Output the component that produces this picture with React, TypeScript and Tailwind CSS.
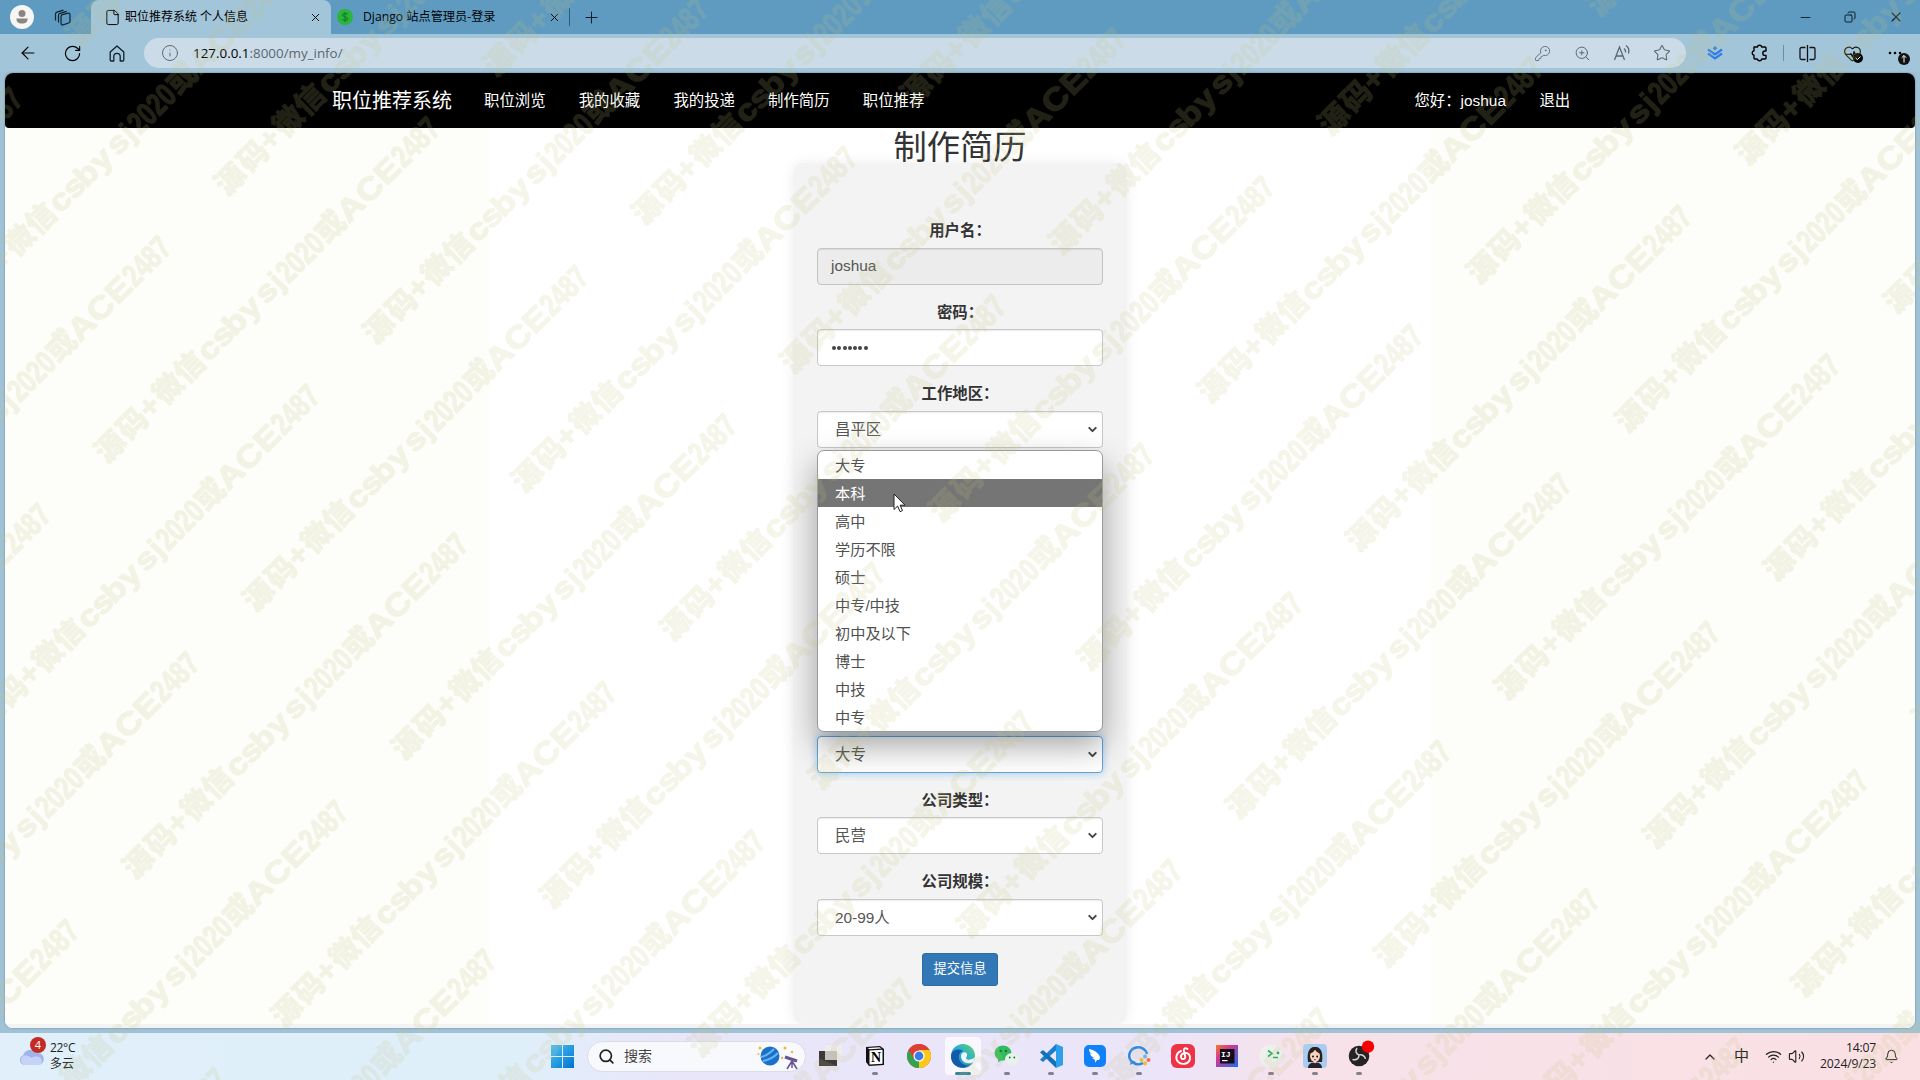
import React from "react";
import {
  ArrowLeft, RotateCw, Info, KeyRound, ZoomIn, Star, X, Plus, Minus, File, Search,
  Wifi, Volume2, Bell, ChevronUp, ChevronDown, HeartPulse, Copy,
} from "lucide-react";

const ui = "font-['Open_Sans','Noto_Sans_CJK_SC',sans-serif]";
const page = "font-['Liberation_Sans','Noto_Sans_CJK_SC',sans-serif]";

/* ---------- Browser chrome ---------- */

function TabBar() {
  return (
    <div className="flex h-[34px] items-stretch bg-[#5f9bc0] text-[#10202c]">
      <div className="flex w-[43px] items-center justify-center">
        <svg width="24" height="28" viewBox="0 0 24 28">
          <ellipse cx="12" cy="14" rx="12" ry="12" fill="#f6f6f4" />
          <circle cx="12" cy="10.5" r="3.5" fill="#8b8580" />
          <path d="M6.4 15.500h11.2c0 4-2.3 5-5.6 5s-5.6-1-5.6-5z" fill="#8b8580" />
        </svg>
      </div>
      <div className="flex w-[48px] items-center pl-[11px]">
        <svg width="17" height="17" viewBox="0 0 17 17" fill="none" stroke="#10202c" strokeWidth="1.2">
          <path d="M7.500 5.800l6.500-1.600a1.600 1.600 0 0 1 2 1.600v6.500a1.800 1.800 0 0 1-1.300 1.700L9.300 15.800A1.600 1.600 0 0 1 7 14.300V7.500z" />
          <path d="M4.500 13.500V6.200a2 2 0 0 1 1.400-1.900L12.600 2.400" />
          <path d="M1.500 11.500V5a2 2 0 0 1 1.400-1.900L9.500 1.200" />
        </svg>
      </div>
      <div className="flex w-[240px] items-center rounded-t-lg bg-[#a3c5da] pl-[13px] text-[12px] text-black">
        <File size={17} strokeWidth={1.4} />
        <span className="ml-1 flex-1 whitespace-nowrap">职位推荐系统 个人信息</span>
        <X size={13} strokeWidth={1.7} className="mr-[9px]" />
      </div>
      <div className="flex w-[238px] items-center pl-[6px] text-[12.2px] text-black">
        <div className="flex size-4 items-center justify-center rounded-full bg-[#2cb53c]">
          <svg width="8" height="10" viewBox="0 0 8 10" fill="none" stroke="#158128" strokeWidth="1.2">
            <path d="M6.5 2.200C5.500 .8 1.500 1 1.500 3s5 1.500 5 3.700-4 2-5.200 .5M4 0v10" />
          </svg>
        </div>
        <span className="ml-[10px] flex-1 whitespace-nowrap">Django 站点管理员-登录</span>
        <X size={13} strokeWidth={1.7} className="mr-[8px]" />
      </div>
      <div className="my-[8px] w-px bg-[#2f5a74]" />
      <Plus size={19} strokeWidth={1.3} className="ml-3 self-center" />
      <div className="ml-auto flex w-[138px] items-center justify-around">
        <Minus size={15} strokeWidth={1.500} />
        <Copy size={12} strokeWidth={2} className="-scale-x-100" />
        <X size={16} strokeWidth={1.6} />
      </div>
    </div>
  );
}

function ToolBar() {
  return (
    <div className="flex h-[38px] items-center bg-[#a3c5da] text-[#1c2a34]">
      <div className="flex w-[144px] items-center pl-[18px] pr-[16px] text-black">
        <ArrowLeft size={20} strokeWidth={1.4} />
        <RotateCw size={19} strokeWidth={1.5} className="ml-[25px]" />
        <svg width="16" height="17" viewBox="0 0 16 17" fill="none" stroke="#10202c" strokeWidth="1.300" className="ml-[27px]">
          <path d="M1.200 7L8 1l6.800 6v8a1 1 0 0 1-1 1h-2.600v-4.500a3.200 3.200 0 0 0-6.400 0V16H2.200a1 1 0 0 1-1-1z" strokeLinejoin="round" />
        </svg>
      </div>
      <div className="flex h-[30px] w-[1542px] items-center rounded-full bg-[#cbdce8] pl-[17px] text-[#5b6770]">
        <Info size={18} strokeWidth={1.3} />
        <span className="ml-[14px] text-[13.400px]"><span className="text-black">127.0.0.1</span>:8000/my_info/</span>
        <div className="ml-auto mr-1 flex items-center">
          <div className="flex w-10 justify-center"><KeyRound size={17} strokeWidth={1.3} /></div>
          <div className="flex w-10 justify-center"><ZoomIn size={17} strokeWidth={1.4} /></div>
          <div className="flex w-10 justify-center">
            <svg width="18" height="18" viewBox="0 0 18 18" fill="none" stroke="currentColor" strokeWidth="1.3">
              <path d="M1.500 16L6.500 3l5 13M3.200 12h6.600M11 4.500q2 1.500 1.500 4M13 1.500q4 3 2.500 8" />
            </svg>
          </div>
          <div className="flex w-10 justify-center"><Star size={18} strokeWidth={1.4} /></div>
        </div>
      </div>
      <div className="flex w-[58px] justify-center">
        <svg width="16" height="14" viewBox="0 0 16 14" fill="none" stroke="#2b7de9" strokeWidth="2.200">
          <path d="M1 3.500l7 5 7-5M1 7.500l7 5 7-5" /><path d="M8 0l2.300 2.200L8 4.400 5.700 2.200z" fill="#2b7de9" stroke="none" />
        </svg>
      </div>
      <div className="flex w-[30px] justify-center">
        <svg width="17" height="18" viewBox="0 0 17 18" fill="none" stroke="#000" strokeWidth="1.400" strokeLinejoin="round">
          <path d="M3 3h3.300a2.300 2.300 0 0 1 4.500 0H14a1 1 0 0 1 1 1v3h-1a2.200 2.200 0 0 0 0 4.400h1V14a1 1 0 0 1-1 1h-3.200a2.300 2.300 0 0 1-4.500 0H4a1 1 0 0 1-1-1v-2.700a2.300 2.300 0 0 1 0-4.500z" />
        </svg>
      </div>
      <div className="ml-[9px] h-4 w-px bg-[#6f8ea2]" />
      <div className="flex w-[47px] justify-center">
        <svg width="17" height="17" viewBox="0 0 17 17" fill="none" stroke="#111" strokeWidth="1.300">
          <path d="M8.500 0v17M6.500 2.500h-4A1.500 1.500 0 0 0 1 4v9a1.500 1.500 0 0 0 1.500 1.500h4M10.500 2.500h4A1.500 1.500 0 0 1 16 4v9a1.500 1.500 0 0 1-1.500 1.500h-4" />
        </svg>
      </div>
      <div className="relative flex w-[42px] justify-center">
        <HeartPulse size={19} strokeWidth={1.500} className="text-[#111]" />
        <svg className="absolute left-[22px] top-[9px]" width="10" height="10" viewBox="0 0 10 10">
          <circle cx="5" cy="5" r="5" fill="#000" /><path d="M2.700 5l1.700 1.700 3-3.200" stroke="#fff" fill="none" />
        </svg>
      </div>
      <div className="relative flex h-5 w-[47px] items-center pl-[15px]">
        <svg width="14" height="4" viewBox="0 0 14 4"><circle cx="2" cy="2" r="1.300" /><circle cx="7" cy="2" r="1.300" /><circle cx="12" cy="2" r="1.300" /></svg>
        <svg className="absolute left-[25px] top-[10px]" width="12" height="12" viewBox="0 0 12 12">
          <circle cx="6" cy="6" r="6" fill="#111" /><path d="M6 9.500v-7M3.700 4.800L6 2.500l2.300 2.300" stroke="#fff" fill="none" />
        </svg>
      </div>
    </div>
  );
}

/* ---------- Web page ---------- */

function SiteNav() {
  return (
    <div className="flex h-[55px] items-center rounded-[4px] bg-black pl-[327px] pt-px text-[15.4px] text-white">
      <span className="w-[152px] text-[20px]">职位推荐系统</span>
      {["职位浏览", "我的收藏", "我的投递", "制作简历", "职位推荐"].map((t) => (
        <span key={t} className="w-[94.700px]">{t}</span>
      ))}
      <span className="ml-[457px] w-[125px]">您好：joshua</span>
      <span>退出</span>
    </div>
  );
}

function Field({ label, value, kind = "select" }: { label: string; value: string; kind?: "select" | "disabled" | "password" | "focus" }) {
  const tone =
    kind === "disabled" ? "border-[#c4c4c4] bg-[#ececec] pb-[2px] shadow-[inset_0_1px_1px_rgba(0,0,0,0.08)]"
    : kind === "focus" ? "border-[#66a3d6] bg-white shadow-[0_0_9px_rgba(102,175,233,0.600)]"
    : "border-[#c8c8c8] bg-white shadow-[inset_0_1px_1px_rgba(0,0,0,0.08)]";
  const isSelect = kind === "select" || kind === "focus";
  return (
    <div className="h-[81.350px]">
      <div className="flex h-[35px] items-center justify-center pt-px font-bold text-[#333]">{label}</div>
      <div className={`flex h-[37px] items-center rounded-[4px] border pr-[3px] text-[#555] ${isSelect ? "pl-[17px]" : "pl-[13px]"} ${tone}`}>
        {kind === "password" ? (
          <span className="flex gap-[1.300px] pl-px">
            {[0, 1, 2, 3, 4, 5, 6].map((i) => <span key={i} className="size-[4px] rounded-full bg-[#444]" />)}
          </span>
        ) : <span className="flex-1">{value}</span>}
        {isSelect && <ChevronDown size={13} strokeWidth={3.600} className="text-[#444]" />}
      </div>
    </div>
  );
}

function OptionPopup() {
  const options = ["大专", "本科", "高中", "学历不限", "硕士", "中专/中技", "初中及以下", "博士", "中技", "中专"];
  return (
    <div className="absolute left-[24px] top-[287px] z-10 w-[286px] overflow-hidden rounded-[7px] border border-[#9a9a9a] bg-white text-[15.200px] text-[#505050] shadow-[0_14px_32px_rgba(0,0,0,0.360)]">
      {options.map((o, i) => (
        <div key={o} className={i === 1 ? "flex h-7 items-center bg-[#757575] pl-[17px] pt-[2px] text-white" : "flex h-7 items-center pl-[17px] pt-[2px]"}>{o}</div>
      ))}
      <svg className="absolute left-[75px] top-[42px]" width="13" height="20" viewBox="0 0 13 20">
        <path d="M1 1v15.500l3.600-3.400 2.500 5.600 2.400-1.100-2.400-5.400h4.900z" fill="#fff" stroke="#222" />
      </svg>
    </div>
  );
}

function ResumePage() {
  return (
    <div className="flex h-[900px] flex-col items-center bg-white">
      <div className="flex h-[896px] w-full justify-center bg-[linear-gradient(to_right,#fdfdf9_485px,#fff_485px,#fff_1425px,#fdfdf9_1425px)]">
        <div className="flex w-[334px] flex-col">
          <h1 className="z-10 flex h-[35px] items-center justify-center pt-[4px] text-[33.300px] leading-none text-[#333]">制作简历</h1>
          <div className="relative flex-1 rounded-[10px] bg-[#f3f3f3] px-6 pt-[50px] text-[15.400px] shadow-[0_0_14px_rgba(0,0,0,0.070)]">
            <Field label="用户名：" value="joshua" kind="disabled" />
            <Field label="密码：" value="" kind="password" />
            <Field label="工作地区：" value="昌平区" />
            <Field label="" value="" />
            <Field label="" value="" />
            <Field label="" value="" />
            <Field label="" value="大专" kind="focus" />
            <Field label="公司类型：" value="民营" />
            <Field label="公司规模：" value="20-99人" />
            <div className="mt-[8px] flex justify-center">
              <button className="h-[33px] w-[76px] rounded-[3px] border border-[#2e6da4] bg-[#3278b6] pb-[2px] text-[13.300px] leading-none text-white">提交信息</button>
            </div>
            <OptionPopup />
          </div>
        </div>
      </div>
      <div className="z-10 h-1 w-full bg-[#f3f3f3]" />
    </div>
  );
}

/* ---------- Taskbar ---------- */

const appIcons: { id: string; dot: boolean; art: React.ReactNode }[] = [
  { id: "desktops", dot: false, art: <><rect x="0" y="7" width="18" height="15" fill="#3b3835" /><rect x="6" y="1" width="17" height="15" fill="#eeecec" opacity=".95" /><rect x="6" y="7" width="12" height="9" fill="#c4c1c0" /></> },
  { id: "notion", dot: true, art: <><path d="M3 3l14-1 4 3v16l-15 1-3-4z" fill="#111" /><path d="M6.500 6.500l13-.8v14l-13 .8z" fill="#fff" /><path d="M4.500 4l12-.7 2 1.300-12 .7z" fill="#fff" /><text x="13" y="18" textAnchor="middle" fontSize="14" fontWeight="700" fontFamily="Liberation Serif">N</text></> },
  { id: "chrome", dot: false, art: <><circle cx="12" cy="12" r="12" fill="#dd3f33" /><path d="M12 12L1.600 6A12 12 0 0 0 12 24l5.200-9z" fill="#31a350" /><path d="M12 12v12A12 12 0 0 0 22.400 6H12z" fill="#fbc819" /><path d="M1.600 6A12 12 0 0 1 22.400 6H12L6.800 15z" fill="#dd3f33" /><circle cx="12" cy="12" r="5.600" fill="#fff" /><circle cx="12" cy="12" r="4.400" fill="#3b7de8" /></> },
  { id: "edge", dot: false, art: <><circle cx="12" cy="12" r="12" fill="url(#edgeG)" /><path d="M0 12C1 6 7 4 12 7c-3 1-5 4-4 8 1 5 7 7 12 5-5 6-20 5-20-8z" fill="#135ba9" /><path d="M10 12c0-4 5-5 6-2 .6 2-1 3-1 4 1 3 6 2 9-1l-1 5c-7 3-13 0-13-6z" fill="#f2f7fb" /></> },
  { id: "wechat", dot: true, art: <><ellipse cx="8" cy="9" rx="8.500" ry="7.500" fill="#2ebd5a" /><path d="M3 14v4l5-2z" fill="#2ebd5a" /><ellipse cx="17" cy="15" rx="7" ry="6" fill="#e7f3ea" /><g fill="#1a6f35"><circle cx="5.500" cy="7" r="1.200" /><circle cx="11" cy="7" r="1.200" /><circle cx="14.700" cy="13.500" r=".9" /><circle cx="19.300" cy="13.500" r=".9" /></g></> },
  { id: "vscode", dot: true, art: <><path d="M17 0l7 3v18l-7 3z" fill="#2ea0ea" /><path d="M17 0v6.500L4 18l-3-2.300L17 0z" fill="#1b7fcb" /><path d="M17 24v-6.500L4 6 1 8.300z" fill="#1270b8" /></> },
  { id: "bird", dot: true, art: <><rect x="1" y="1" width="22" height="22" rx="5" fill="#1181fa" /><path d="M6 5c6 1 11 5 11 9l-1 2-2 0-2 3c1-3-1-4-3-5 1 0 2 0 2 0-2-1-4-3-4-5 1 1 2 1 2 1C7 9 6 7 6 5z" fill="#fff" /></> },
  { id: "chat", dot: true, art: <><path d="M16 19a9 8.500 0 1 1 4-9" fill="none" stroke="#2887e8" strokeWidth="2.400" /><path d="M4 16l-1 5 6-3z" fill="#2887e8" /><g><circle cx="18" cy="12.500" r="2" fill="#58b9f0" /><circle cx="21.500" cy="16" r="2" fill="#f0704a" /><circle cx="18" cy="19.500" r="2" fill="#f7b833" /><circle cx="14.500" cy="16" r="2" fill="#f7b833" /></g></> },
  { id: "music", dot: false, art: <><rect width="24" height="24" rx="6" fill="#ee3346" /><path d="M16.500 5c-2-1.400-4-.5-3.600 1.500l1.300 6c.5 2.800-3.700 3.500-4.200.8C9.500 10 13 8.200 16 9.200c4.500 2 4 9.300-2 10.500C8 20.800 4.500 16.500 5.500 12 6.200 9.300 8 7.700 10 7" fill="none" stroke="#fff" strokeWidth="1.900" strokeLinecap="round" /></> },
  { id: "idea", dot: false, art: <><rect x="1" y="1" width="22" height="22" fill="url(#ijG)" /><rect x="5" y="5" width="14.500" height="14.500" fill="#160a18" /><text x="6" y="12.800" fontSize="8" fontWeight="700" fill="#fff" fontFamily="Liberation Mono">IJ</text><rect x="7" y="16" width="5.500" height="1.200" fill="#fff" /></> },
  { id: "terminal", dot: true, art: <><circle cx="12" cy="12" r="11.500" fill="#eef0ee" /><path d="M9 6.500l4 3-4 3" fill="none" stroke="#24b05a" strokeWidth="1.600" /><path d="M14 13.500h5" stroke="#24b05a" strokeWidth="1.500" /><circle cx="19" cy="9" r="1.400" fill="#24b05a" /></> },
  { id: "avatar", dot: true, art: <><rect width="24" height="24" rx="4" fill="#a9cdf0" /><path d="M5 18C4 10 5 3 12 3s8 7 7 15z" fill="#2b211f" /><ellipse cx="12" cy="12" rx="5" ry="6" fill="#f4d3c2" /><path d="M7 9.500q4-1 5-4.500 1 3 5 4.500L16 4l-4-1-4 1z" fill="#2b211f" /><path d="M10.500 17h3v3h-3z" fill="#f4d3c2" /><path d="M5 24q0-5 5.500-5.500 1.500 1.500 3 0Q19 19 19 24z" fill="#26222c" /><circle cx="10" cy="12.500" r=".9" /><circle cx="14.200" cy="12.500" r=".9" /><path d="M11 15.700h2" stroke="#c03c42" /></> },
  { id: "obs", dot: true, art: <><circle cx="12" cy="12" r="10.300" fill="#252325" /><g fill="none" stroke="#d6d2d2" strokeWidth="1.500"><path d="M12 11c-3-1-4-4-2-7M12 11c3-1 6 1 6.500 4M12 11.500c0 3-3 5-6.500 4" /></g><circle cx="21" cy="2.700" r="6.200" fill="#f80000" /></> },
];

function TaskBar() {
  return (
    <div className={`flex h-[47px] items-stretch bg-[linear-gradient(to_right,#e0effa_0%,#dfeffa_27%,#e9e6fa_35%,#ebe5f9_60%,#f7e2ea_68%,#fae0e3_100%)] text-[#222] ${ui}`}>
      <div className="flex w-[551px] items-center pl-[18px]">
        <svg width="30" height="32" viewBox="0 0 30 32" className="-mt-3">
          <path d="M6 30a5 5 0 0 1-1-9.500 8 8 0 0 1 14-2.500 6 6 0 0 1 1.500 12z" fill="#9fb5ea" />
          <path d="M6 30a5 5 0 0 1-.5-9c3-1 6 0 8 2 2-2 7-2 9 0a4 4 0 0 1-2 7z" fill="#c5d3f7" />
          <circle cx="20" cy="10" r="8" fill="#c42b22" />
          <text x="20" y="14" textAnchor="middle" fontSize="11" fill="#fff">4</text>
        </svg>
        <div className="ml-[2px] flex flex-col pb-[2px] text-[12px] leading-4"><span className="tracking-[-0.300px]">22°C</span><span>多云</span></div>
      </div>
      <div className="flex w-[36px] items-center">
        <svg width="23" height="23" viewBox="0 0 23 23"><g fill="url(#winG)"><path d="M0 0h11v11H0zM12 0h11v11H12zM0 12h11v11H0zM12 12h11v11H12z" /></g></svg>
      </div>
      <div className="mt-2 flex h-[31px] w-[219px] items-center rounded-full border border-[#dcdce8] bg-[#f8f9fd] pl-[10px] pr-[6px]">
        <Search size={17} strokeWidth={2.400} />
        <span className="ml-[9px] flex-1 pb-[2px] text-[14px] text-[#444]">搜索</span>
        <svg width="42" height="26" viewBox="0 0 42 26">
          <circle cx="13" cy="12" r="9.500" fill="#1d70ca" /><path d="M4 13c6-1 10-5 13-8M6 17c7-1 11-4 15-8" stroke="#65b6f2" strokeWidth="2" fill="none" />
          <g fill="#edb744"><circle cx="3" cy="4" r="1.500" /><circle cx="1.500" cy="10" r="1" /><circle cx="28" cy="4" r="1.500" /><circle cx="35" cy="8" r="1.300" /><circle cx="25" cy="14" r="1.200" /></g>
          <path d="M28 13l12 4" stroke="#665291" strokeWidth="3" /><path d="M35 17l-5 8M35 17l5 8M35 17v7" stroke="#665291" strokeWidth="1.500" />
        </svg>
      </div>
      <div className="ml-[3px] flex">
        {appIcons.map((a) => (
          <div key={a.id} className="flex w-11 flex-col items-center pt-1">
            <div className={a.id === "edge" ? "flex h-[38px] w-[36px] justify-center rounded bg-white/70 pt-[7px]" : "flex h-[38px] w-[36px] justify-center pt-[7px]"}>
              <svg width="24" height="24" viewBox="0 0 24 24" className="overflow-visible">{a.art}</svg>
            </div>
            {a.dot && <div className="-mt-[3px] h-[3px] w-[6px] rounded-full bg-[#85808e]" />}
            {a.id === "edge" && <div className="-mt-[3px] h-[3px] w-4 rounded-full bg-[#36849a]" />}
          </div>
        ))}
      </div>
      <div className="ml-auto flex items-center">
        <ChevronUp size={16} strokeWidth={1.800} />
        <span className="ml-[16px] w-[24px] pb-[2px] text-[15px]">中</span>
        <Wifi size={17} strokeWidth={1.800} className="ml-[7px]" />
        <Volume2 size={17} strokeWidth={1.600} className="ml-[6px]" />
        <div className="ml-[11px] flex w-[60px] flex-col whitespace-nowrap pb-px text-right text-[12.200px] leading-4 tracking-[-0.200px]"><span>14:07</span><span className="flex justify-end">2024/9/23</span></div>
        <Bell size={15} strokeWidth={1.600} className="ml-[8px] mr-[21px]" />
      </div>
    </div>
  );
}

/* ---------- Repeating diagonal watermark ---------- */

const wide = (xs: number[]) => xs.map((x) => x / 1.15).join(" ");

function Watermark() {
  const marks: [number, number][] = [];
  for (let m = -6; m < 12; m++) {
    for (let n = -10; n < 16; n++) {
      const x = 90 + 148.5 * n + 268.8 * m;
      const y = 449 + 148.5 * n - 119 * m;
      if (x > -420 && x < 1940 && y > -40 && y < 1480) marks.push([x, y]);
    }
  }
  return (
    <svg className="pointer-events-none absolute inset-0 z-20" width="1920" height="1080" opacity="0.17">
      <defs>
        <g id="mark" fill="#c2c282" stroke="#c2c282" strokeWidth="1.300" strokeLinejoin="round" fontWeight="900" textAnchor="middle" fontFamily="'Liberation Sans','Noto Sans CJK SC',sans-serif" fontSize="30">
          <text y="23" x="16 48" strokeWidth="0.600">源码</text>
          <text y="22" x="72">+</text>
          <text y="23" x="98 128" strokeWidth="0.600">微信</text>
          <text y="23" transform="scale(1.15 1)" x={wide([154.5, 174, 192, 213, 236])}>csbys</text>
          <text y="23" x="251">j</text>
          <text y="24" x="284" fontSize="32" textLength="54" lengthAdjust="spacingAndGlyphs">2020</text>
          <text y="23" x="327" strokeWidth="0.600">或</text>
          <text y="24" transform="scale(1.15 1)" fontSize="31" x={wide([355, 381.5, 407])}>ACE</text>
          <text y="24" x="447" fontSize="32" textLength="54" lengthAdjust="spacingAndGlyphs">2487</text>
        </g>
      </defs>
      {marks.map(([x, y], i) => <use key={i} href="#mark" transform={`translate(${x} ${y}) rotate(-45)`} />)}
    </svg>
  );
}

export default function App() {
  return (
    <div className={`relative h-[1080px] w-[1920px] overflow-hidden bg-[#a0c2d6] ${page}`}>
      <svg width="0" height="0" className="absolute">
        <defs>
          <linearGradient id="edgeG" x1="0" y1="1" x2="1" y2="0"><stop offset="0" stopColor="#0e69bb" /><stop offset=".5" stopColor="#28a9d9" /><stop offset="1" stopColor="#5fd766" /></linearGradient>
          <linearGradient id="ijG" x1="0" y1="0" x2="1" y2="1"><stop offset="0" stopColor="#f97a26" /><stop offset=".35" stopColor="#cf3a92" /><stop offset="1" stopColor="#1570ef" /></linearGradient>
          <linearGradient id="winG" x1="0" y1="0" x2="1" y2="1"><stop offset="0" stopColor="#4cc2f3" /><stop offset="1" stopColor="#0072cf" /></linearGradient>
        </defs>
      </svg>
      <div className={ui}><TabBar /><ToolBar /></div>
      <div className="mx-[5px] mb-[5px] mt-px overflow-hidden rounded-lg bg-white shadow-[0_0_2px_rgba(40,80,110,0.600)]">
        <SiteNav />
        <ResumePage />
      </div>
      <TaskBar />
      <Watermark />
    </div>
  );
}
